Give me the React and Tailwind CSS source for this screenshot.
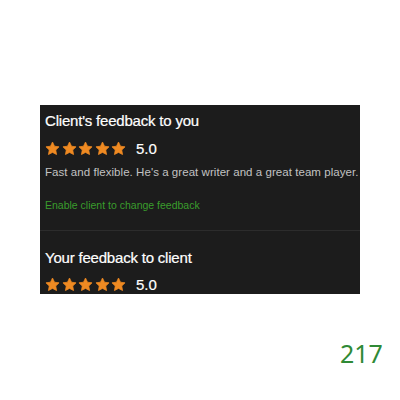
import React from 'react';

const Star = () => (
  <svg width="15" height="15" viewBox="0 0 24 24" className="fill-[#ef8a22]">
    <path
      d="M12 1.6l3.2 6.7 7.3 1-5.3 5.1 1.3 7.3L12 18.2l-6.5 3.5 1.3-7.3-5.3-5.1 7.3-1z"
      strokeLinejoin="round"
      className="stroke-[#ef8a22]"
      strokeWidth="1.2"
    />
  </svg>
);

const Rating = ({ value }) => (
  <div className="flex items-center">
    <div className="flex gap-[1.5px]">
      {[0, 1, 2, 3, 4].map((i) => (
        <Star key={i} />
      ))}
    </div>
    <span className="ml-[10px] text-[15px] text-white leading-none [-webkit-text-stroke:0.2px_white]">{value}</span>
  </div>
);

const App = () => {
  return (
    <div className="w-[400px] h-[400px] bg-white relative font-['Liberation_Sans',Arial,sans-serif]">
      <div className="absolute left-[40px] top-[105px] w-[320px] h-[189px] bg-[#1c1c1c] overflow-hidden">
        <div className="pl-[5px] pt-[7px]">
          <h2 className="text-[15px] text-white leading-[18px] tracking-[-0.2px] [-webkit-text-stroke:0.2px_white]">
            Client's feedback to you
          </h2>
          <div className="mt-[11px]">
            <Rating value="5.0" />
          </div>
          <p className="mt-[9px] text-[11.5px] text-[#c2c2c2] whitespace-nowrap leading-[14px] tracking-[0.05px]">
            Fast and flexible. He's a great writer and a great team player.
          </p>
          <p className="mt-[20px] text-[10.5px] text-[#3a9d2c] leading-[12px]">Enable client to change feedback</p>
        </div>
        <div className="mt-[19px] border-t border-[#2c2c2c]" />
        <div className="pl-[5px] pt-[18px]">
          <h2 className="text-[15px] text-white leading-[18px] tracking-[-0.2px] [-webkit-text-stroke:0.2px_white]">
            Your feedback to client
          </h2>
          <div className="mt-[10px]">
            <Rating value="5.0" />
          </div>
        </div>
      </div>
      <div className="absolute left-[340px] top-[341px] text-[25px] text-[#2f8a36] font-['Noto_Sans',sans-serif] leading-none">
        217
      </div>
    </div>
  );
};

export default App;
